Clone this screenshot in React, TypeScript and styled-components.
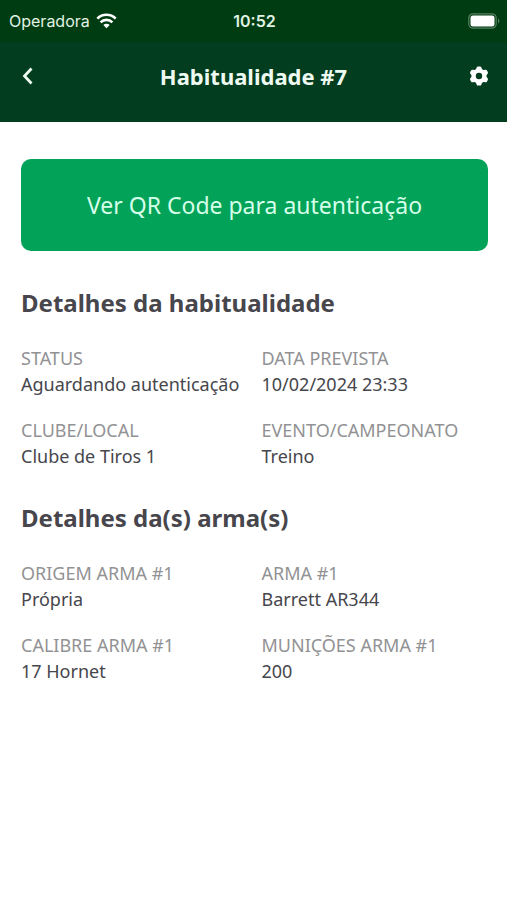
import React from 'react';
import styled, { createGlobalStyle } from 'styled-components';

const GlobalStyle = createGlobalStyle`
  *, *::before, *::after { box-sizing: border-box; }
  body {
    margin: 0;
    background: #ffffff;
    color: #46464c;
    font-family: 'Noto Sans', sans-serif;
  }
`;

const Header = styled.header`
  background: #013d1e;
  color: #ffffff;
`;

const StatusBar = styled.div`
  display: grid;
  grid-template-columns: 1fr auto 1fr;
  align-items: center;
  height: 42px;
  padding: 0 7px 0 9px;
  background: #003c12;
  font-family: Inter, sans-serif;
  font-size: 16px;
`;

const Carrier = styled.div`
  display: flex;
  align-items: center;
  gap: 6px;
  color: #e0f3e4;
`;

const Clock = styled.time`
  font-weight: 600;
  color: #e0f3e4;
`;

const Battery = styled.svg`
  justify-self: end;
`;

const NavBar = styled.div`
  display: grid;
  grid-template-columns: 32px 1fr 32px;
  align-items: center;
  height: 80px;
  padding: 0 12px 12px;
`;

const IconButton = styled.button`
  display: flex;
  align-items: center;
  justify-content: center;
  height: 40px;
  padding: 0;
  border: 0;
  background: none;
  color: inherit;
`;

const Title = styled.h1`
  margin: 0;
  text-align: center;
  font-size: 22px;
  line-height: 32px;
  font-weight: 700;
  color: #eefaf1;
`;

const Main = styled.main`
  padding: 37px 19px 37px 21px;
`;

const PrimaryButton = styled.button`
  display: block;
  width: 100%;
  padding: 28px 16px;
  border: 0;
  border-radius: 10px;
  background: #02a358;
  color: #d5ffe9;
  font: inherit;
  font-size: 23px;
  line-height: 36px;
`;

const Section = styled.section`
  padding-top: 36px;

  & + & {
    padding-top: 33px;
  }
`;

const Heading = styled.h2`
  margin: 0 0 26px;
  font-size: 24px;
  line-height: 32px;
  font-weight: 700;
`;

const Details = styled.dl`
  display: grid;
  grid-template-columns: 1fr 1fr;
  gap: 20px 14px;
  margin: 0;
`;

const Term = styled.dt`
  color: #929294;
  font-size: 18px;
  line-height: 26px;
  white-space: nowrap;
`;

const Value = styled.dd`
  margin: 0;
  font-size: 18px;
  line-height: 26px;
  white-space: nowrap;
`;

interface Detail {
  label: string;
  value: string;
}

const habitDetails: Detail[] = [
  { label: 'STATUS', value: 'Aguardando autenticação' },
  { label: 'DATA PREVISTA', value: '10/02/2024 23:33' },
  { label: 'CLUBE/LOCAL', value: 'Clube de Tiros 1' },
  { label: 'EVENTO/CAMPEONATO', value: 'Treino' },
];

const weaponDetails: Detail[] = [
  { label: 'ORIGEM ARMA #1', value: 'Própria' },
  { label: 'ARMA #1', value: 'Barrett AR344' },
  { label: 'CALIBRE ARMA #1', value: '17 Hornet' },
  { label: 'MUNIÇÕES ARMA #1', value: '200' },
];

function DetailSection({ title, items }: { title: string; items: Detail[] }) {
  return (
    <Section>
      <Heading>{title}</Heading>
      <Details>
        {items.map(({ label, value }) => (
          <div key={label}>
            <Term>{label}</Term>
            <Value>{value}</Value>
          </div>
        ))}
      </Details>
    </Section>
  );
}

const gearTeeth = [0, 60, 120, 180, 240, 300];

export default function App() {
  return (
    <>
      <GlobalStyle />
      <Header>
        <StatusBar>
          <Carrier>
            <span>Operadora</span>
            <svg width="21" height="16" viewBox="0 0 21 16" fill="none" stroke="#ffffff" strokeWidth="2.6" aria-hidden="true">
              <path d="M1.3 5.6a13 13 0 0 1 18.4 0" />
              <path d="M4.6 9.3a8.3 8.3 0 0 1 11.8 0" />
              <path d="M7.3 12a4.5 4.5 0 0 1 6.4 0l-3.2 3.3z" fill="#ffffff" stroke="none" />
            </svg>
          </Carrier>
          <Clock>10:52</Clock>
          <Battery width="32" height="16" viewBox="0 0 32 16" aria-hidden="true">
            <rect x="0.8" y="0.8" width="27.4" height="14.4" rx="4.2" fill="none" stroke="#56805f" strokeWidth="1.2" />
            <rect x="2.5" y="2.5" width="24" height="11" rx="2.5" fill="#ffffff" />
            <path d="M30 5.5c1.8.8 1.8 4.2 0 5z" fill="#56805f" />
          </Battery>
        </StatusBar>
        <NavBar>
          <IconButton aria-label="Voltar">
            <svg width="14" height="18" viewBox="0 0 14 18" fill="none" stroke="#ecfaef" strokeWidth="2.8" aria-hidden="true">
              <path d="M10.500 1.500L3.500 9l7 7.500" />
            </svg>
          </IconButton>
          <Title>Habitualidade #7</Title>
          <IconButton aria-label="Configurações">
            <svg width="20" height="20" viewBox="0 0 20 20" aria-hidden="true">
              <circle cx="10" cy="10" r="5.4" fill="none" stroke="#ffffff" strokeWidth="4.4" />
              {gearTeeth.map((angle) => (
                <path
                  key={angle}
                  d="M6.800 4L7.600 1.600Q8 .4 9 .4h2q1 0 1.400 1.200L13.200 4z"
                  fill="#ffffff"
                  transform={`rotate(${angle} 10 10)`}
                />
              ))}
            </svg>
          </IconButton>
        </NavBar>
      </Header>
      <Main>
        <PrimaryButton>Ver QR Code para autenticação</PrimaryButton>
        <DetailSection title="Detalhes da habitualidade" items={habitDetails} />
        <DetailSection title="Detalhes da(s) arma(s)" items={weaponDetails} />
      </Main>
    </>
  );
}
